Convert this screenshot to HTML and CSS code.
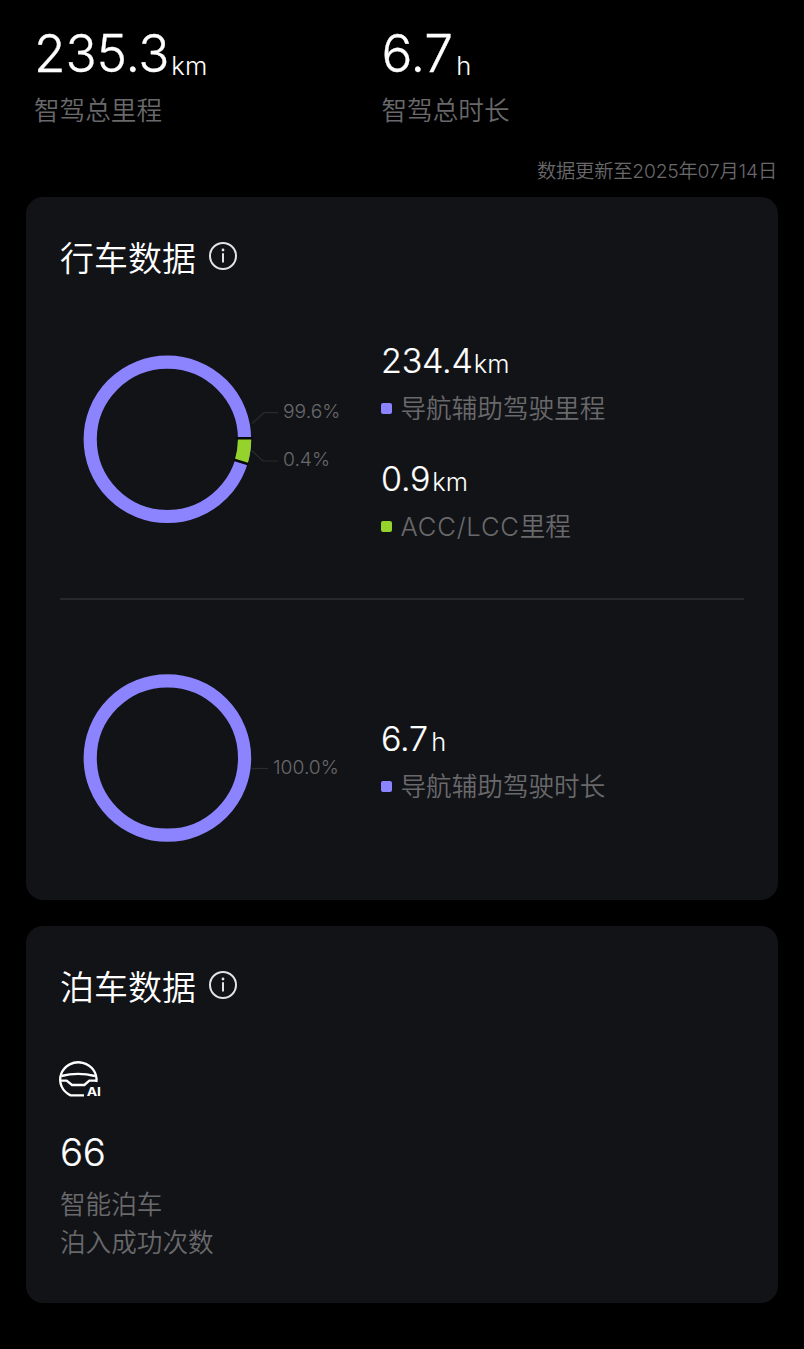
FILE: index.html
```html
<!DOCTYPE html>
<html lang="zh-CN">
<head>
<meta charset="utf-8">
<title>智驾数据</title>
<link rel="stylesheet" href="styles.css">
</head>
<body>
<main class="page">
  <header class="summary">
    <div class="total">
      <div class="total-value">235.3<span class="total-unit">km</span></div>
      <div class="label">智驾总里程</div>
    </div>
    <div class="total">
      <div class="total-value">6.7<span class="total-unit hours">h</span></div>
      <div class="label">智驾总时长</div>
    </div>
  </header>
  <p class="updated">数据更新至2025年07月14日</p>

  <section class="card driving">
    <h2 class="title">行车数据
      <svg class="info" viewBox="0 0 28 28"><circle cx="14" cy="14" r="13"/><path d="M14 11.3v9.2"/><circle class="dot" cx="14" cy="8" r="1.4"/></svg>
    </h2>
    <div class="row mileage">
      <svg class="chart" viewBox="0 0 300 200">
        <circle class="ring" cx="107.4" cy="99.3" r="77.2"/>
        <path class="slice" d="M184.6 98.3A77.2 77.2 0 0 1 181.2 122"/>
        <path class="gap" d="M176 98.2H193M174 119.7L188.5 124.2"/>
        <path class="leader" d="M192 83.5L204 72.7H218M192 111L203 121H218"/>
        <text class="percent" x="223" y="78">99.6%</text>
        <text class="percent" x="223" y="126">0.4%</text>
      </svg>
      <div class="metrics">
        <div class="metric">
          <div class="value">234.4<span class="unit">km</span></div>
          <div class="label legend"><i class="mark purple"></i><span class="name">导航辅助驾驶里程</span></div>
        </div>
        <div class="metric">
          <div class="value">0.9<span class="unit short">km</span></div>
          <div class="label legend"><i class="mark green"></i><span class="name"><span class="latin">ACC/LCC</span>里程</span></div>
        </div>
      </div>
    </div>
    <div class="row duration">
      <svg class="chart" viewBox="0 0 300 200">
        <circle class="ring" cx="107.4" cy="98" r="77.2"/>
        <path class="leader" d="M192 108.5H208"/>
        <text class="percent" x="213" y="114">100.0%</text>
      </svg>
      <div class="metrics">
        <div class="metric">
          <div class="value">6.7<span class="unit hours">h</span></div>
          <div class="label legend"><i class="mark purple"></i><span class="name">导航辅助驾驶时长</span></div>
        </div>
      </div>
    </div>
  </section>

  <section class="card parking">
    <h2 class="title">泊车数据
      <svg class="info" viewBox="0 0 28 28"><circle cx="14" cy="14" r="13"/><path d="M14 11.3v9.2"/><circle class="dot" cx="14" cy="8" r="1.4"/></svg>
    </h2>
    <svg class="wheel" viewBox="54 60 132 111">
      <path d="M169 126A54.5 52 0 1 0 92 166H132"/>
      <path d="M64 108Q114 95 165 108"/>
      <path d="M61 122H80L96 135H133L148 122H170"/>
      <text x="140" y="167" textLength="43" lengthAdjust="spacingAndGlyphs">AI</text>
    </svg>
    <div class="count">66</div>
    <div class="label count-label">智能泊车<br>泊入成功次数</div>
  </section>
</main>
</body>
</html>
```

FILE: styles.css
```css
* { box-sizing: border-box; }

body {
  margin: 0;
  background: #000;
  color: #fff;
  font-family: Inter, "Noto Sans CJK SC", sans-serif;
  font-weight: 350;
}

.page {
  width: 804px;
  height: 1349px;
  padding: 24px 26px 0;
}

.summary {
  display: grid;
  grid-template-columns: 347.5px 1fr;
  padding-left: 8px;
}

.total-value {
  height: 68px;
  font-size: 51.5px;
  line-height: 58px;
  letter-spacing: -0.2px;
  white-space: nowrap;
  -webkit-text-stroke: 0.3px #fff;
}

.total-unit {
  position: relative;
  top: 3px;
  margin-left: 2px;
  font-size: 25.6px;
  letter-spacing: 0;
  -webkit-text-stroke: 0;
}

.total-unit.hours { margin-left: 3.5px; }

.label {
  color: #69696b;
  font-size: 25.6px;
  line-height: 38px;
}

.updated {
  margin: 26px 1px 0;
  height: 41px;
  color: #69696b;
  font-size: 19.3px;
  line-height: 30px;
  letter-spacing: -0.2px;
  text-align: right;
}

.card {
  padding: 0 34px;
  border-radius: 17px;
  background: #121317;
}

.driving { height: 703px; }

.parking {
  height: 377px;
  margin-top: 26px;
}

.title {
  display: flex;
  align-items: center;
  gap: 13px;
  height: 118px;
  margin: 0;
  font-size: 34px;
  font-weight: 350;
}

.info {
  width: 28px;
  height: 28px;
  fill: none;
  stroke: #e3e3e5;
  stroke-width: 2;
}

.info .dot {
  fill: #e3e3e5;
  stroke: none;
}

.row {
  display: grid;
  grid-template-columns: 321px 1fr;
}

.mileage {
  height: 285px;
  padding-top: 25px;
  border-bottom: 2px solid #27282b;
}

.duration { padding-top: 60px; }

.chart {
  width: 300px;
  height: 200px;
}

.ring, .slice {
  fill: none;
  stroke: #8c84ff;
  stroke-width: 13.2;
}

.slice { stroke: #95d22b; }

.gap {
  stroke: #08090c;
  stroke-width: 2.6;
}

.leader {
  fill: none;
  stroke: #2a2b2d;
  stroke-width: 1.2;
}

.percent {
  fill: #69696b;
  font-size: 19.3px;
}

.metric { height: 118px; }
.duration .metrics { padding-top: 58px; }

.value {
  height: 49px;
  font-size: 34px;
  line-height: 42px;
  letter-spacing: -0.2px;
  -webkit-text-stroke: 0.2px #fff;
}

.unit {
  margin-left: 1px;
  font-size: 25.5px;
  letter-spacing: 0;
  -webkit-text-stroke: 0;
}

.unit.short { margin-left: 2px; }
.unit.hours { margin-left: 3.5px; }

.legend {
  display: flex;
  align-items: center;
  white-space: nowrap;
}

.name { padding-top: 1px; }

.latin { letter-spacing: 0.8px; }

.mark {
  width: 11px;
  height: 11px;
  margin-right: 8.5px;
  border-radius: 2px;
}

.purple { background: #8c84ff; }
.green { background: #95d22b; }

.wheel {
  display: block;
  width: 44px;
  height: 37px;
  margin: 16px 0 0 -2px;
  overflow: visible;
  fill: none;
  stroke: #fff;
  stroke-width: 7;
}

.wheel text {
  fill: #fff;
  stroke: none;
  font-size: 34px;
  font-weight: 700;
}

.count {
  margin-top: 31px;
  height: 58px;
  font-size: 38.4px;
  line-height: 49px;
  letter-spacing: -0.3px;
  -webkit-text-stroke: 0.2px #fff;
}

.count-label { line-height: 38px; }
```
